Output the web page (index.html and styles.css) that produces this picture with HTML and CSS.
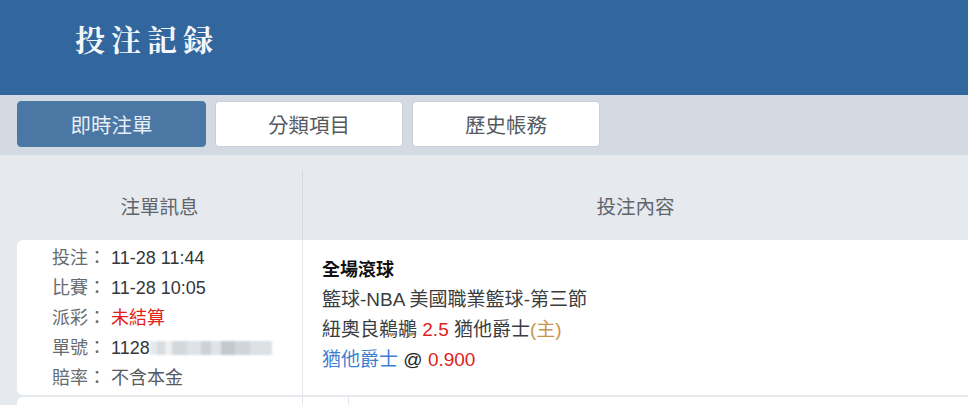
FILE: index.html
```html
<!DOCTYPE html>
<html lang="zh-Hant">
<head>
<meta charset="utf-8">
<title>投注記録</title>
<link rel="stylesheet" href="styles.css">
</head>
<body>
<header class="topbar">
  <h1 class="title">投注記録</h1>
</header>
<nav class="tabs">
  <button class="tab active">即時注單</button>
  <button class="tab">分類項目</button>
  <button class="tab">歷史帳務</button>
</nav>
<section class="list">
  <div class="list-head">
    <div class="head-cell">注單訊息</div>
    <div class="head-cell divided">投注內容</div>
  </div>
  <div class="row">
    <div class="info">
      <div class="line"><span class="lbl">投注：</span><span class="val">11-28 11:44</span></div>
      <div class="line"><span class="lbl">比賽：</span><span class="val">11-28 10:05</span></div>
      <div class="line"><span class="lbl">派彩：</span><span class="val red">未結算</span></div>
      <div class="line"><span class="lbl">單號：</span><span class="val">1128<span class="masked"></span></span></div>
      <div class="line"><span class="lbl">賠率：</span><span class="val muted">不含本金</span></div>
    </div>
    <div class="content">
      <div class="cline bold">全場滾球</div>
      <div class="cline">籃球-NBA 美國職業籃球-第三節</div>
      <div class="cline">紐奧良鵜鶘 <span class="red">2.5</span> 猶他爵士<span class="gold">(主)</span></div>
      <div class="cline"><span class="blue">猶他爵士</span> <span class="dark">@</span> <span class="red">0.900</span></div>
    </div>
  </div>
  <div class="row next">
    <div class="info"></div>
    <div class="content split"><div class="sub"></div></div>
  </div>
</section>
</body>
</html>
```

FILE: styles.css
```css
* { box-sizing: border-box; }
html, body { margin: 0; padding: 0; }
body {
  width: 968px;
  height: 405px;
  overflow: hidden;
  background: #e6e9ee;
  font-family: "Liberation Sans", "Noto Sans CJK TC", sans-serif;
  color: #333;
}
.topbar {
  height: 95px;
  background: #31669e;
  display: flex;
  align-items: center;
  padding-left: 75px;
}
.title {
  margin: 0 0 20px 0;
  font-family: "Noto Serif CJK TC", "Noto Sans CJK TC", serif;
  font-weight: 700;
  font-size: 30px;
  letter-spacing: 6px;
  color: #f4f6f9;
}
.tabs {
  height: 60px;
  background: #d4dae2;
  display: flex;
  gap: 9px;
  padding: 6px 0 0 17px;
}
.tab {
  width: 188px;
  height: 46px;
  border: 1px solid #c9d0d9;
  border-radius: 4px;
  background: #ffffff;
  color: #555a60;
  font-family: "Liberation Sans", "Noto Sans CJK TC", sans-serif;
  font-size: 20.5px;
  padding: 0;
}
.tab.active {
  width: 189px;
  background: #4a77a3;
  border-color: #4a77a3;
  color: #e6edf5;
}
.list { padding-left: 17px; }
.list-head {
  height: 85px;
  display: grid;
  grid-template-columns: 285px 1fr;
}
.head-cell {
  display: flex;
  align-items: center;
  justify-content: center;
  padding-top: 15px;
  font-size: 19.5px;
  color: #60656c;
}
.head-cell.divided {
  border-left: 1px solid #d6dae0;
  margin-top: 15px;
  padding-top: 0;
}
.row {
  display: grid;
  grid-template-columns: 285px 1fr;
  background: #fff;
  border-radius: 6px 0 0 6px;
  height: 155px;
}
.info {
  padding: 3px 0 0 35px;
}
.line {
  height: 30px;
  line-height: 30px;
  font-size: 18px;
  white-space: nowrap;
}
.lbl { color: #666b70; }
.val { color: #33373b; margin-left: 5px; }
.val.muted { color: #555a5f; }
.masked {
  display: inline-block;
  width: 122px;
  height: 14px;
  vertical-align: -1px;
  background: linear-gradient(90deg, #e6e9ec 0 6%, #d9dde0 6% 12%, #edeff1 12% 18%, #d3d8db 18% 30%, #dfe3e6 30% 42%, #cdd2d6 42% 50%, #e0e4e7 50% 58%, #c4c9cd 58% 70%, #d1d5d9 70% 82%, #dde1e4 82% 100%);
  filter: blur(1px);
}
.content {
  border-left: 1px solid #e3e6ea;
  padding: 15px 0 0 19px;
}
.cline {
  height: 30px;
  line-height: 30px;
  font-size: 19px;
  color: #3a3d40;
  white-space: nowrap;
}
.cline.bold { font-weight: 700; color: #111; font-size: 18px; }
.red { color: #e0231c; }
.gold { color: #c9954c; }
.blue { color: #3f7fd0; }
.dark { color: #222; }
.row.next {
  margin-top: 2px;
  height: 20px;
}
.content.split { padding: 0 0 0 45px; }
.sub { border-left: 1px solid #e3e6ea; height: 100%; }
```
